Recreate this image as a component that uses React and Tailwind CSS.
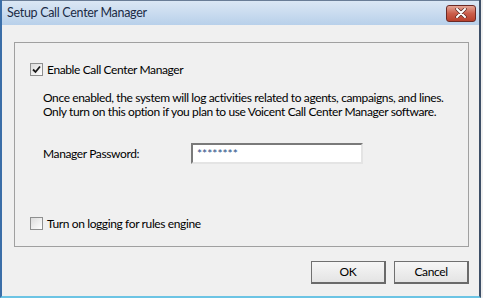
import React from 'react';

const Check = ({ checked }) => (
  <div className="w-[13px] h-[13px] border border-[#8e8f8f] bg-[linear-gradient(135deg,#dcdcdc,#ffffff)] flex items-center justify-center shrink-0">
    {checked && (
      <svg width="9" height="9" viewBox="0 0 9 9">
        <path d="M1 4.5 L3.5 7 L8 1.5" stroke="#1a1a1a" strokeWidth="1.8" fill="none" />
      </svg>
    )}
  </div>
);

const Button = ({ children }) => (
  <button className="w-[75px] h-[23px] border border-[#707070] border-r-2 border-b-2 border-r-[#6a6a6a] border-b-[#6a6a6a] bg-[linear-gradient(#f6f6f6,#e4e4e4)] text-[12px] text-black">
    {children}
  </button>
);

export default function App() {
  return (
    <div className="w-[483px] h-[298px] bg-[#f0f0f0] font-['Lato',sans-serif] text-[12px] tracking-[-0.38px] text-black overflow-hidden whitespace-nowrap">
      <div className="w-[481px] h-[298px] flex flex-col border-l-2 border-l-[#3b6ea8] border-r-2 border-r-[#3d4e66] border-b-2 border-b-[#6cc4e4]">
        {/* Title bar */}
        <div className="h-[25px] shrink-0 flex items-center justify-between pl-[5px] pr-[3px] bg-[linear-gradient(#dbe7f4,#b8d0ea)] border-t border-t-[#6a7d96]">
          <span className="text-[12.5px] tracking-[-0.3px] text-[#1b2b45]">Setup Call Center Manager</span>
          <div className="w-[30px] h-[17px] rounded-[3px] border border-[#6b2a26] bg-[linear-gradient(#e4a596,#cb5e4b_50%,#b8402c)] flex items-center justify-center">
            <svg width="12" height="10" viewBox="0 0 12 10">
              <path d="M2 1 L10 9 M10 1 L2 9" stroke="#5a2a24" strokeWidth="3.4" strokeLinecap="round" />
              <path d="M2 1 L10 9 M10 1 L2 9" stroke="#ffffff" strokeWidth="2" strokeLinecap="round" />
            </svg>
          </div>
        </div>

        {/* Client area */}
        <div className="flex-1 flex flex-col pt-[17px] pl-[12px] pr-[10px]">
          <div className="h-[205px] border border-[#a0a0a0] flex flex-col pl-[15px]">
            <div className="flex items-center gap-[4px] mt-[20px] h-[13px]">
              <Check checked />
              <span>Enable Call Center Manager</span>
            </div>
            <div className="mt-[15px] pl-[13px] leading-[14px]">
              <p>Once enabled, the system will log activities related to agents, campaigns, and lines.</p>
              <p>Only turn on this option if you plan to use Voicent Call Center Manager software.</p>
            </div>
            <div className="flex items-center mt-[24px] pl-[13px]">
              <span className="w-[148px]">Manager Password:</span>
              <div className="w-[172px] h-[21px] bg-white border-2 border-t-[#7a7a7a] border-l-[#7a7a7a] border-r-[#e4e4e4] border-b-[#e4e4e4] flex items-center pl-[4px] text-[#2a4f86] tracking-[0px]">
                ********
              </div>
            </div>
            <div className="flex items-center gap-[4px] mt-[53px] h-[13px]">
              <Check />
              <span>Turn on logging for rules engine</span>
            </div>
          </div>
          <div className="flex justify-end gap-[8px] mt-[14px]">
            <Button>OK</Button>
            <Button>Cancel</Button>
          </div>
        </div>
      </div>
    </div>
  );
}
